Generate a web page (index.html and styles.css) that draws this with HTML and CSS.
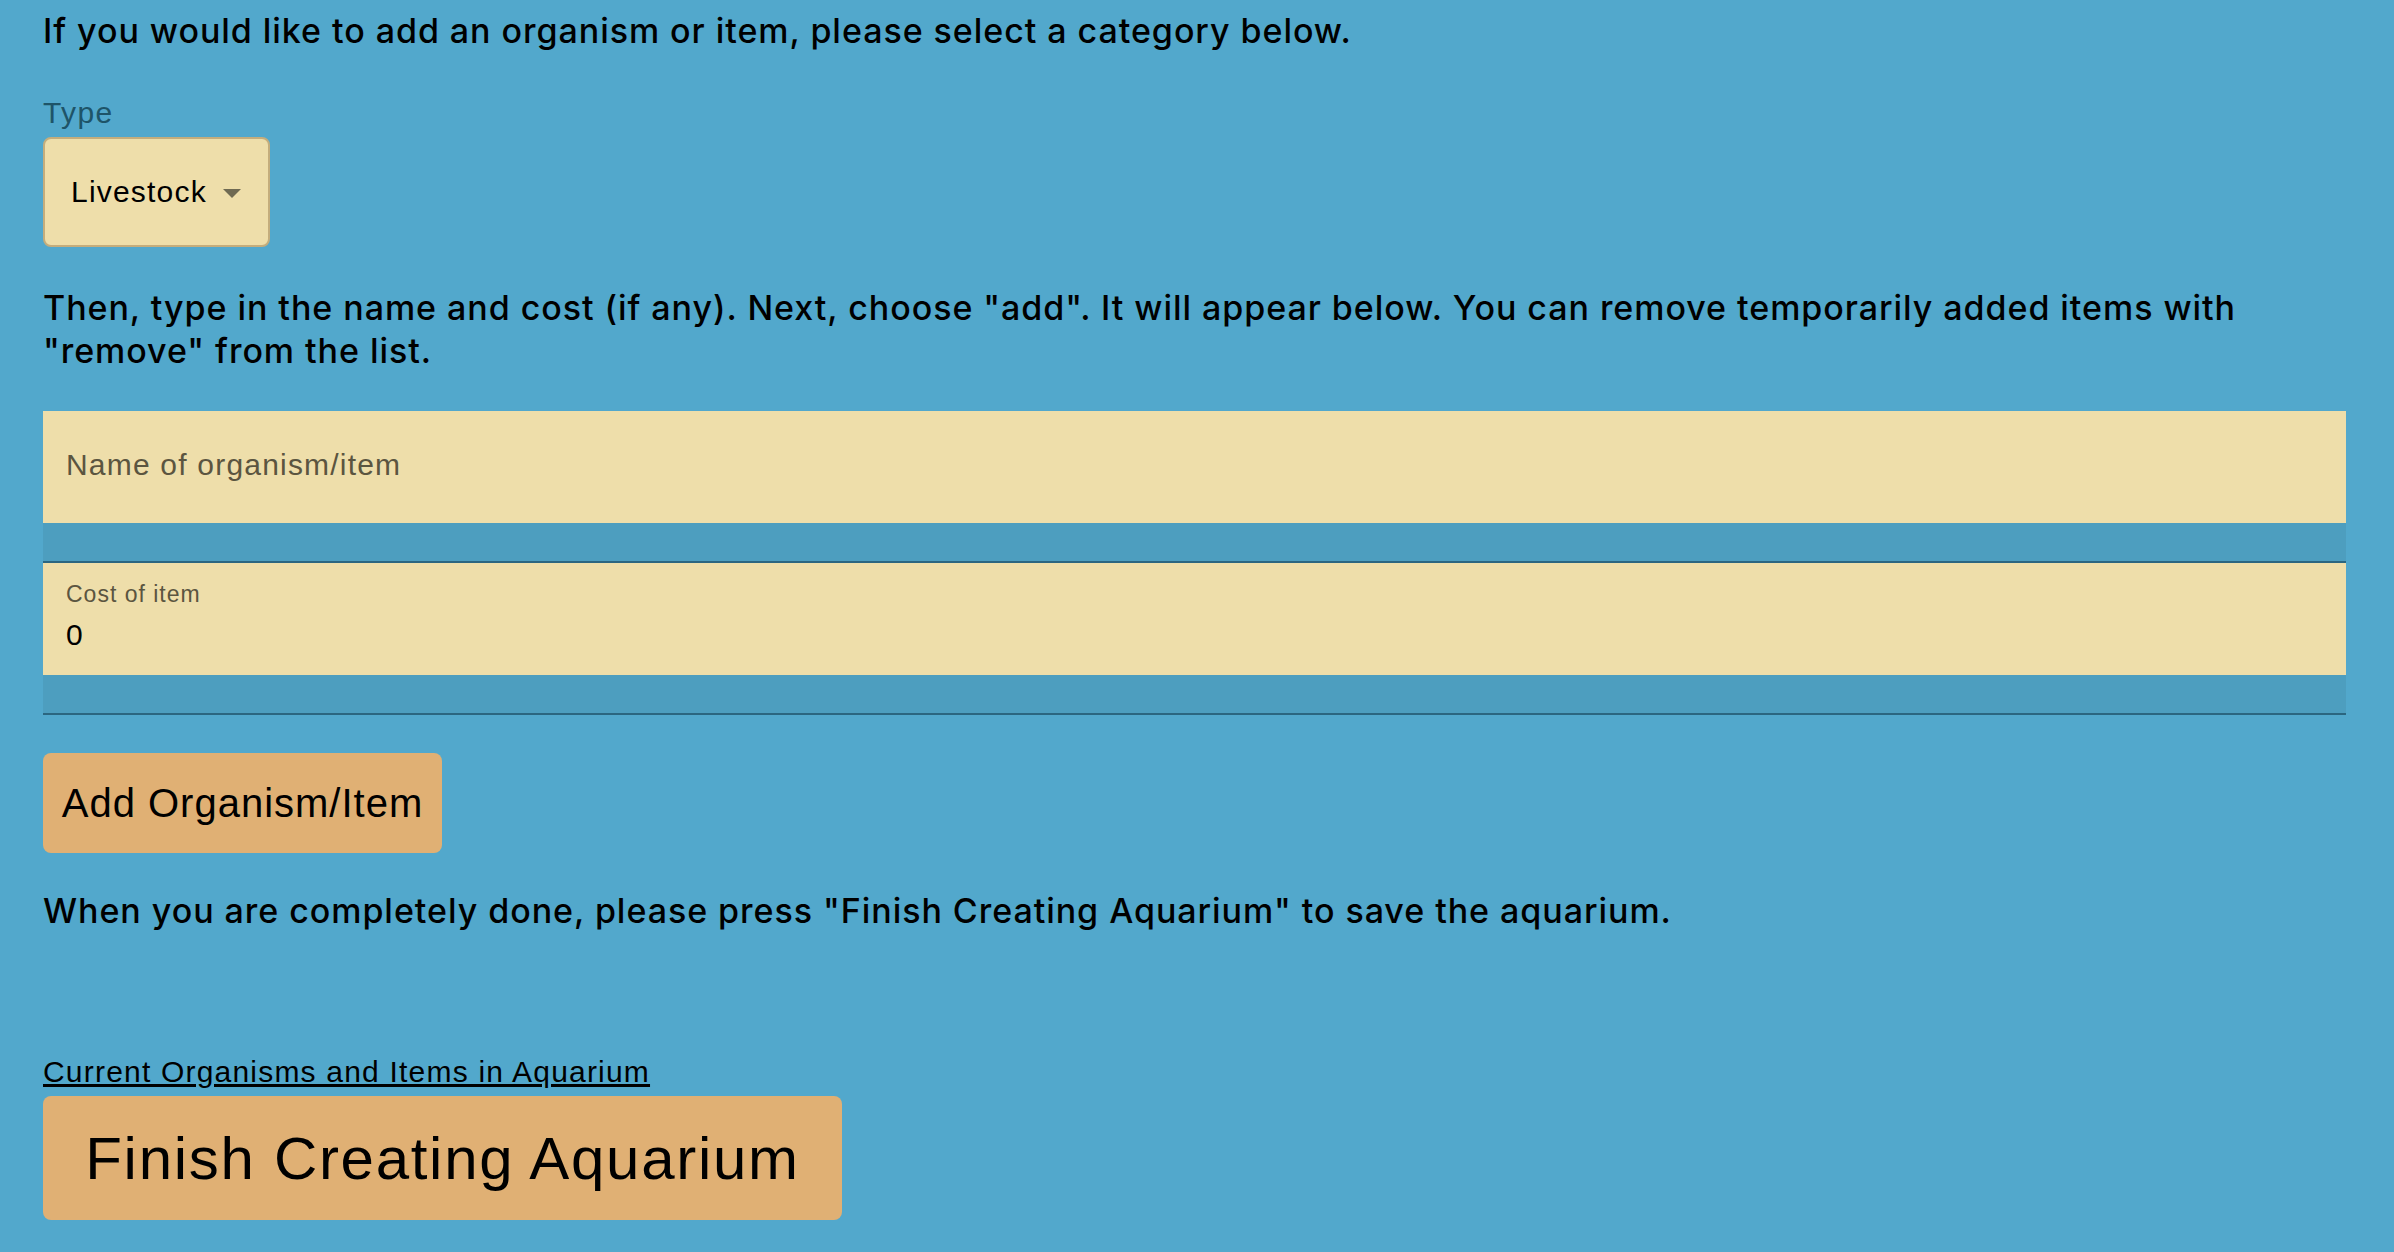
FILE: index.html
```html
<!DOCTYPE html>
<html>
<head>
<meta charset="utf-8">
<link rel="stylesheet" href="styles.css">
</head>
<body>
<main class="page">
  <p class="text intro">If you would like to add an organism or item, please select a category below.</p>
  <div class="type-label">Type</div>
  <div class="select">
    <span class="select-value">Livestock</span>
    <span class="caret"></span>
  </div>
  <p class="text instructions">Then, type in the name and cost (if any). Next, choose "add". It will appear below. You can remove temporarily added items with "remove" from the list.</p>
  <div class="field">
    <div class="field-box">
      <span class="placeholder">Name of organism/item</span>
    </div>
    <div class="field-strip"></div>
  </div>
  <div class="field">
    <div class="field-box cost">
      <span class="small-label">Cost of item</span>
      <span class="value">0</span>
    </div>
    <div class="field-strip"></div>
  </div>
  <button class="btn add-btn">Add Organism/Item</button>
  <p class="text done">When you are completely done, please press "Finish Creating Aquarium" to save the aquarium.</p>
  <a class="list-link" href="#">Current Organisms and Items in Aquarium</a>
  <button class="btn finish-btn">Finish Creating Aquarium</button>
</main>
</body>
</html>
```
FILE: styles.css
```css
html, body {
  margin: 0;
  padding: 0;
  background: #52a8cc;
}
body {
  width: 2394px;
  height: 1252px;
  overflow: hidden;
}
.page {
  padding: 9px 48px 0 43px;
  display: flex;
  flex-direction: column;
  align-items: flex-start;
  font-family: "Liberation Sans", Arial, sans-serif;
  color: #000;
}
.text {
  font-family: Inter, "Noto Sans", sans-serif;
  font-size: 34px;
  font-weight: 500;
  letter-spacing: 0.95px;
  line-height: 43px;
  margin: 0;
  color: #000;
}
.type-label {
  margin-top: 45px;
  font-size: 30px;
  letter-spacing: 1.4px;
  line-height: 32px;
  color: #1e5468;
}
.select {
  margin-top: 8px;
  box-sizing: border-box;
  width: 227px;
  height: 110px;
  background: #eedeaa;
  border: 2px solid #c4ad7c;
  border-radius: 8px;
  display: flex;
  align-items: center;
  padding-left: 26px;
}
.select-value {
  font-size: 30px;
  letter-spacing: 1.2px;
  color: #000;
}
.caret {
  margin-left: 16px;
  width: 0;
  height: 0;
  border-left: 9.5px solid transparent;
  border-right: 9.5px solid transparent;
  border-top: 9.5px solid #6f6a52;
  margin-top: 2px;
}
.instructions {
  margin-top: 39px;
}
.field {
  align-self: stretch;
  display: flex;
  flex-direction: column;
}
.instructions + .field {
  margin-top: 39px;
}
.field-box {
  height: 112px;
  background: #eedeaa;
  box-sizing: border-box;
  padding-left: 23px;
  display: flex;
  flex-direction: column;
  justify-content: center;
}
.placeholder {
  font-size: 30px;
  letter-spacing: 1.2px;
  color: #5b5540;
  margin-top: -4px;
}
.cost {
  justify-content: flex-start;
  padding-top: 17px;
}
.small-label {
  font-size: 23px;
  letter-spacing: 1px;
  line-height: 28px;
  color: #5b5540;
}
.value {
  font-size: 30px;
  line-height: 34px;
  margin-top: 10px;
  color: #000;
}
.field-strip {
  height: 38px;
  background: #4d9ebf;
  border-bottom: 2px solid #2b6680;
}
.btn {
  font-family: "Liberation Sans", Arial, sans-serif;
  background: #e0b074;
  border: none;
  border-radius: 8px;
  color: #000;
  padding: 0;
  cursor: pointer;
}
.add-btn {
  margin-top: 38px;
  width: 399px;
  height: 100px;
  font-size: 40px;
  letter-spacing: 1px;
}
.done {
  margin-top: 36px;
}
.list-link {
  margin-top: 123px;
  font-size: 30px;
  letter-spacing: 1.2px;
  line-height: 34px;
  color: #000;
  text-decoration: underline;
}
.finish-btn {
  margin-top: 7px;
  width: 799px;
  height: 124px;
  font-size: 60px;
  letter-spacing: 1.7px;
}
```
